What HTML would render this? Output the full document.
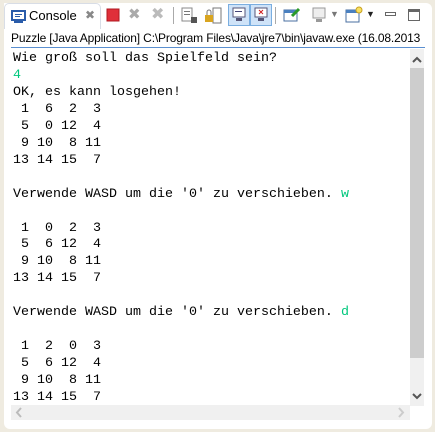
<!DOCTYPE html>
<html><head><style>
*{margin:0;padding:0;box-sizing:border-box}
body{width:435px;height:432px;background:#efebe0;position:relative;overflow:hidden;font-family:"Liberation Sans",sans-serif}
.panel{position:absolute;left:4px;top:3px;width:428px;height:426px;background:#fff;border-radius:0 6px 6px 6px}
.tab{position:absolute;left:4px;top:3px;width:97px;height:26px;background:#fff;border:1px solid #d8dde6;border-bottom:none;border-radius:5px 5px 0 0;font-size:13px;color:#000}
.hdr{position:absolute;left:11px;top:30px;font-size:12px;letter-spacing:-0.15px;color:#000;white-space:nowrap;width:414px;overflow:hidden;height:18px;line-height:17px;border-bottom:1px solid #5a8fd0}
.out{position:absolute;left:13px;top:51px;font-family:"Liberation Mono",monospace;font-size:13.33px;line-height:16.95px;white-space:pre;color:#000}
.g{color:#00c87d}
.vs{position:absolute;left:410px;top:49px;width:14px;height:357px;background:#f0f0f0}
.th{position:absolute;left:410px;top:68px;width:14px;height:290px;background:#cdcdcd}
.hs{position:absolute;left:11px;top:405px;width:399px;height:15px;background:#f0f0f0}
.ico{position:absolute}
</style></head><body>
<div class="panel"></div>
<div class="tab">
<svg class="ico" style="left:6px;top:6px" width="15" height="14"><rect x="1" y="1" width="13" height="9" fill="#fff" stroke="#2a5caa" stroke-width="2"/><rect x="4" y="4" width="7" height="1" fill="#2a5caa"/><rect x="4" y="6" width="5" height="1" fill="#2a5caa"/><rect x="3" y="11" width="9" height="2" fill="#2a5caa"/></svg>
<span style="position:absolute;left:24px;top:4px">Console</span>
<span style="position:absolute;left:80px;top:4px;color:#888;font-size:12px">&#x2716;</span>
</div>
<svg class="ico" style="left:106px;top:8px" width="14" height="14"><rect x="1" y="1" width="12" height="12" fill="#e0303a" stroke="#b01820"/></svg>
<span class="ico" style="left:128px;top:5px;color:#aaa;font-size:15px">&#x2716;</span>
<span class="ico" style="left:151px;top:4px;color:#bbb;font-size:16px">&#x2716;</span>
<div class="ico" style="left:173px;top:7px;width:1px;height:17px;background:#aaa"></div>
<svg class="ico" style="left:181px;top:7px" width="17" height="17"><rect x="1" y="1" width="10" height="13" fill="#fff" stroke="#888"/><rect x="3" y="4" width="6" height="1" fill="#777"/><rect x="3" y="7" width="6" height="1" fill="#777"/><rect x="10" y="10" width="6" height="6" fill="#555"/></svg>
<svg class="ico" style="left:204px;top:7px" width="18" height="18"><rect x="9" y="1" width="8" height="15" fill="#fff" stroke="#777"/><rect x="1" y="8" width="8" height="7" fill="#d9a520"/><path d="M3 8V5a2 2 0 0 1 4 0v3" fill="none" stroke="#777"/></svg>
<div class="ico" style="left:228px;top:4px;width:22px;height:22px;background:#cfe3f8;border:1px solid #7aaee0"></div>
<svg class="ico" style="left:231px;top:7px" width="16" height="16"><rect x="2" y="1" width="12" height="9" fill="#fff" stroke="#557"/><rect x="4" y="4" width="7" height="1" fill="#447"/><rect x="5" y="11" width="6" height="3" fill="#557"/></svg>
<div class="ico" style="left:250px;top:4px;width:22px;height:22px;background:#cfe3f8;border:1px solid #7aaee0"></div>
<svg class="ico" style="left:253px;top:7px" width="16" height="16"><rect x="2" y="1" width="12" height="9" fill="#fff" stroke="#557"/><path d="M6 3l4 4M10 3l-4 4" stroke="#d02020"/><rect x="5" y="11" width="6" height="3" fill="#557"/></svg>
<div class="ico" style="left:275px;top:7px;width:1px;height:17px;background:#aaa"></div>
<svg class="ico" style="left:283px;top:6px" width="18" height="18"><rect x="1" y="4" width="13" height="11" fill="#fff" stroke="#4a6fa0"/><rect x="1" y="4" width="13" height="3" fill="#4a80c0"/><path d="M9 10l7-7" stroke="#2a9a2a" stroke-width="3"/></svg>
<svg class="ico" style="left:312px;top:7px" width="16" height="16"><rect x="1" y="1" width="12" height="10" fill="#eee" stroke="#999"/><rect x="4" y="12" width="6" height="3" fill="#999"/></svg>
<span class="ico" style="left:330px;top:9px;font-size:9px;color:#777">&#x25BC;</span>
<svg class="ico" style="left:345px;top:5px" width="18" height="18"><rect x="1" y="5" width="13" height="12" fill="#fff" stroke="#4a6fa0"/><rect x="1" y="5" width="13" height="3" fill="#4a80c0"/><circle cx="14" cy="5" r="3" fill="#f8e060" stroke="#c8a020"/></svg>
<span class="ico" style="left:366px;top:9px;font-size:9px;color:#222">&#x25BC;</span>
<div class="ico" style="left:385px;top:12px;width:11px;height:4px;border:1px solid #666"></div>
<div class="ico" style="left:408px;top:9px;width:12px;height:12px;border:1px solid #666;border-top-width:3px"></div>
<div class="hdr">Puzzle [Java Application] C:\Program Files\Java\jre7\bin\javaw.exe (16.08.2013 </div>
<div class="out">Wie groß soll das Spielfeld sein?
<span class="g">4</span>
OK, es kann losgehen!
 1  6  2  3
 5  0 12  4
 9 10  8 11
13 14 15  7

Verwende WASD um die '0' zu verschieben. <span class="g">w</span>

 1  0  2  3
 5  6 12  4
 9 10  8 11
13 14 15  7

Verwende WASD um die '0' zu verschieben. <span class="g">d</span>

 1  2  0  3
 5  6 12  4
 9 10  8 11
13 14 15  7</div>
<div class="vs"></div><div class="th"></div>
<svg class="ico" style="left:411px;top:56px" width="12" height="8"><path d="M2 6l4-4 4 4" fill="none" stroke="#555" stroke-width="2"/></svg>
<svg class="ico" style="left:411px;top:392px" width="12" height="8"><path d="M2 2l4 4 4-4" fill="none" stroke="#555" stroke-width="2"/></svg>
<div class="hs"></div>
<svg class="ico" style="left:15px;top:407px" width="8" height="11"><path d="M6 1L2 5.5 6 10" fill="none" stroke="#bbb" stroke-width="2"/></svg>
<svg class="ico" style="left:397px;top:407px" width="8" height="11"><path d="M2 1l4 4.5L2 10" fill="none" stroke="#ccc" stroke-width="2"/></svg>
</body></html>
